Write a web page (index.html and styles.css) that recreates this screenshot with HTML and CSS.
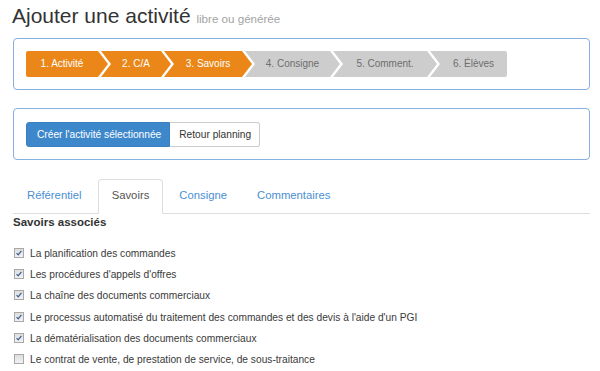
FILE: index.html
```html
<!DOCTYPE html>
<html lang="fr">
<head>
<meta charset="utf-8">
<title>Ajouter une activité</title>
<link rel="stylesheet" href="styles.css">
</head>
<body>
<div class="page">
  <h1 class="title">Ajouter une activité <small class="subtitle">libre ou générée</small></h1>

  <div class="panel panel-wizard">
    <ol class="wizard">
      <li class="step done">1. Activité</li>
      <li class="step done">2. C/A</li>
      <li class="step done">3. Savoirs</li>
      <li class="step">4. Consigne</li>
      <li class="step">5. Comment.</li>
      <li class="step">6. Élèves</li>
    </ol>
  </div>

  <div class="panel panel-actions">
    <div class="btn-group">
      <button class="btn btn-primary" type="button">Créer l'activité sélectionnée</button>
      <button class="btn btn-default" type="button">Retour planning</button>
    </div>
  </div>

  <ul class="tabs">
    <li class="tab"><a href="#">Référentiel</a></li>
    <li class="tab active"><a href="#">Savoirs</a></li>
    <li class="tab"><a href="#">Consigne</a></li>
    <li class="tab"><a href="#">Commentaires</a></li>
  </ul>

  <h3 class="section-title">Savoirs associés</h3>

  <ul class="checklist">
    <li class="check-item"><span class="cb checked"><svg viewBox="0 0 10 10" width="8" height="8"><path d="M2 5.2 L4 7.3 L8 2.3" fill="none" stroke="#3b5f94" stroke-width="1.6"/></svg></span>La planification des commandes</li>
    <li class="check-item"><span class="cb checked"><svg viewBox="0 0 10 10" width="8" height="8"><path d="M2 5.2 L4 7.3 L8 2.3" fill="none" stroke="#3b5f94" stroke-width="1.6"/></svg></span>Les procédures d'appels d'offres</li>
    <li class="check-item"><span class="cb checked"><svg viewBox="0 0 10 10" width="8" height="8"><path d="M2 5.2 L4 7.3 L8 2.3" fill="none" stroke="#3b5f94" stroke-width="1.6"/></svg></span>La chaîne des documents commerciaux</li>
    <li class="check-item"><span class="cb checked"><svg viewBox="0 0 10 10" width="8" height="8"><path d="M2 5.2 L4 7.3 L8 2.3" fill="none" stroke="#3b5f94" stroke-width="1.6"/></svg></span>Le processus automatisé du traitement des commandes et des devis à l'aide d'un PGI</li>
    <li class="check-item"><span class="cb checked"><svg viewBox="0 0 10 10" width="8" height="8"><path d="M2 5.2 L4 7.3 L8 2.3" fill="none" stroke="#3b5f94" stroke-width="1.6"/></svg></span>La dématérialisation des documents commerciaux</li>
    <li class="check-item"><span class="cb"></span>Le contrat de vente, de prestation de service, de sous-traitance</li>
  </ul>
</div>
</body>
</html>
```
FILE: styles.css
```css
html, body {
  margin: 0;
  padding: 0;
  background: #ffffff;
}

body {
  font-family: "Liberation Sans", Arial, Helvetica, sans-serif;
  color: #333333;
}

.page {
  padding: 3px 10px 0 13px;
}

.title {
  margin: 0 0 0 -1px;
  font-size: 21px;
  font-weight: normal;
  line-height: 26px;
  color: #333333;
  white-space: nowrap;
}

.subtitle {
  font-size: 11.6px;
  color: #a3a3a3;
}

.panel {
  border: 1px solid #86b0df;
  border-radius: 4px;
  background: #ffffff;
}

.panel-wizard {
  margin-top: 6px;
  padding: 12px 12px;
}

.wizard {
  display: flex;
  margin: 0;
  padding: 0;
  list-style: none;
}

.step {
  flex: none;
  box-sizing: border-box;
  height: 26px;
  line-height: 26px;
  font-size: 10px;
  text-align: center;
  white-space: nowrap;
  background: #cdcdcd;
  color: #6e6e6e;
  margin-left: -7px;
  padding: 0 10px;
  clip-path: polygon(0 0, calc(100% - 10px) 0, 100% 50%, calc(100% - 10px) 100%, 0 100%, 10px 50%);
}

.step.done {
  background: #eb8719;
  color: #ffffff;
}

.step:first-child {
  margin-left: 0;
  padding-left: 0;
  border-radius: 2px 0 0 2px;
  clip-path: polygon(0 0, calc(100% - 10px) 0, 100% 50%, calc(100% - 10px) 100%, 0 100%);
}

.step:last-child {
  padding-right: 0;
  border-radius: 0 2px 2px 0;
  clip-path: polygon(0 0, 100% 0, 100% 100%, 0 100%, 10px 50%);
}

.step:nth-child(1) { width: 82px; }
.step:nth-child(2) { width: 70px; }
.step:nth-child(3) { width: 88px; }
.step:nth-child(4) { width: 95px; }
.step:nth-child(5) { width: 104px; }
.step:nth-child(6) { width: 77px; }

.panel-actions {
  margin-top: 18px;
  padding: 13px 12px 12px;
}

.btn-group {
  display: flex;
}

.btn {
  font-family: inherit;
  font-size: 10.2px;
  line-height: 23px;
  height: 25px;
  margin: 0;
  padding: 0 9px;
  border: 1px solid #cccccc;
  background: #ffffff;
  color: #333333;
  cursor: pointer;
  white-space: nowrap;
}

.btn-primary {
  background: #3d87cb;
  border-color: #3a80c0;
  color: #ffffff;
  border-radius: 3px 0 0 3px;
  padding: 0 8px 0 10px;
}

.btn-default {
  border-left: none;
  border-radius: 0 3px 3px 0;
  padding: 0 8px 0 9px;
}

.tabs {
  display: flex;
  margin: 19px 0 0;
  padding: 0;
  list-style: none;
  border-bottom: 1px solid #dddddd;
}

.tab {
  margin: 0 2px -1px 0;
}

.tab a {
  display: block;
  padding: 0 13px 2px;
  line-height: 31px;
  font-size: 11.3px;
  color: #4a90d2;
  text-decoration: none;
  border: 1px solid transparent;
  border-radius: 4px 4px 0 0;
}

.tab.active a {
  color: #555555;
  background: #ffffff;
  border-color: #dddddd;
  border-bottom-color: #ffffff;
}

.section-title {
  margin: 1px 0 0;
  font-size: 11.5px;
  line-height: 14px;
  font-weight: bold;
  color: #333333;
}

.checklist {
  margin: 14px 0 0;
  padding: 0;
  list-style: none;
}

.check-item {
  display: flex;
  align-items: center;
  height: 21.2px;
  font-size: 10.2px;
  color: #3a3a3a;
  white-space: nowrap;
}

.cb {
  flex: none;
  box-sizing: border-box;
  width: 10px;
  height: 10px;
  margin: -1px 6px 0 1px;
  border: 1px solid #a8a8a8;
  background: linear-gradient(#dedede, #f2f2f2);
  display: flex;
  align-items: center;
  justify-content: center;
}

.cb svg {
  display: block;
}
```
